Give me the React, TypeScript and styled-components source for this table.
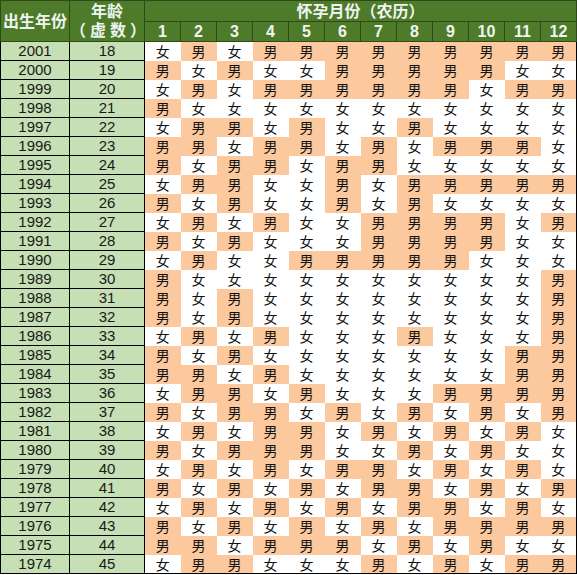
import styled, { createGlobalStyle } from "styled-components";

const GlobalStyle = createGlobalStyle`
  html, body {
    margin: 0;
    padding: 0;
    background: #ffffff;
  }
  body {
    font-family: "Liberation Sans", "Noto Sans CJK SC", sans-serif;
  }
`;

// M = 男, F = 女, months 1..12
const rows: [number, number, string][] = [
  [2001, 18, "FMFMMMMMMMMM"],
  [2000, 19, "MFMFFMMMMMFF"],
  [1999, 20, "FMFMMMMMMFMM"],
  [1998, 21, "MFFFFFFFFFFF"],
  [1997, 22, "FMMFMFFMFFFF"],
  [1996, 23, "MMFMMFMFMMMF"],
  [1995, 24, "MFMMFMMFFFFF"],
  [1994, 25, "FMMFFMFMMMMM"],
  [1993, 26, "MFMFFMFMFFFF"],
  [1992, 27, "FMFMFFMMMMFM"],
  [1991, 28, "MFMFFFMMMMFF"],
  [1990, 29, "FMFFMMMMMFFF"],
  [1989, 30, "MFFFFFFFFFFM"],
  [1988, 31, "MFMFFFFFFFFM"],
  [1987, 32, "MFMFFFFFFFFM"],
  [1986, 33, "FMFMFFFMFFFM"],
  [1985, 34, "MFMFFFFFFFMM"],
  [1984, 35, "MMFMFFFFFFMM"],
  [1983, 36, "FMMFMFFFMMMM"],
  [1982, 37, "MFMMFMFMFMFM"],
  [1981, 38, "FMFMMFMFMFMF"],
  [1980, 39, "MFMMMFFMFMFF"],
  [1979, 40, "FMFMFMMFMFMF"],
  [1978, 41, "MFMFMFMMFMFM"],
  [1977, 42, "FMFMFMFMMFMF"],
  [1976, 43, "MFMFMFMFMMMM"],
  [1975, 44, "MMFMMMFMFMFF"],
  [1974, 45, "FMMFFFMFMFMM"],
];

const months = [1, 2, 3, 4, 5, 6, 7, 8, 9, 10, 11, 12];

const Table = styled.table`
  width: 577px;
  table-layout: fixed;
  border-collapse: collapse;
  border-bottom: 1px solid #000;
  border-right: 1px solid #000;
`;

const HeadCell = styled.th<{ $w?: number; $h?: number }>`
  width: ${(p) => (p.$w ? `${p.$w}px` : "auto")};
  height: ${(p) => (p.$h ? `${p.$h}px` : "auto")};
  padding: 0;
  background: #4e7b2a;
  color: #eef4f0;
  font-weight: bold;
  font-size: 16px;
  line-height: 19px;
  text-align: center;
  border: 1px solid #2e4a18;
  font-family: "Liberation Sans", "Noto Sans CJK SC", sans-serif;
`;

const Paren = styled.span`
  letter-spacing: 4px;
  margin-right: -4px;
`;

const LabelCell = styled.td`
  height: 18px;
  padding: 0;
  background: #c6dfb4;
  border: 1px solid #000;
  text-align: center;
  font-size: 15px;
  line-height: 18px;
  color: #1a1a1a;
`;

const GenderCell = styled.td<{ $boy: boolean }>`
  padding: 0;
  background: ${(p) => (p.$boy ? "#fcc89d" : "#ffffff")};
  text-align: center;
  font-size: 14px;
  line-height: 18px;
  color: #111;
  font-family: "Noto Sans CJK SC", sans-serif;
`;

export default function App() {
  return (
    <>
      <GlobalStyle />
      <Table>
        <thead>
          <tr>
            <HeadCell rowSpan={2} $w={68}>
              出生年份
            </HeadCell>
            <HeadCell rowSpan={2} $w={74}>
              年龄
              <br />
              <Paren>（虚数）</Paren>
            </HeadCell>
            <HeadCell colSpan={12} $h={20}>
              怀孕月份（农历）
            </HeadCell>
          </tr>
          <tr>
            {months.map((m) => (
              <HeadCell key={m} $h={18}>
                {m}
              </HeadCell>
            ))}
          </tr>
        </thead>
        <tbody>
          {rows.map(([year, age, seq]) => (
            <tr key={year}>
              <LabelCell>{year}</LabelCell>
              <LabelCell>{age}</LabelCell>
              {seq.split("").map((g, i) => (
                <GenderCell key={i} $boy={g === "M"}>
                  {g === "M" ? "男" : "女"}
                </GenderCell>
              ))}
            </tr>
          ))}
        </tbody>
      </Table>
    </>
  );
}
